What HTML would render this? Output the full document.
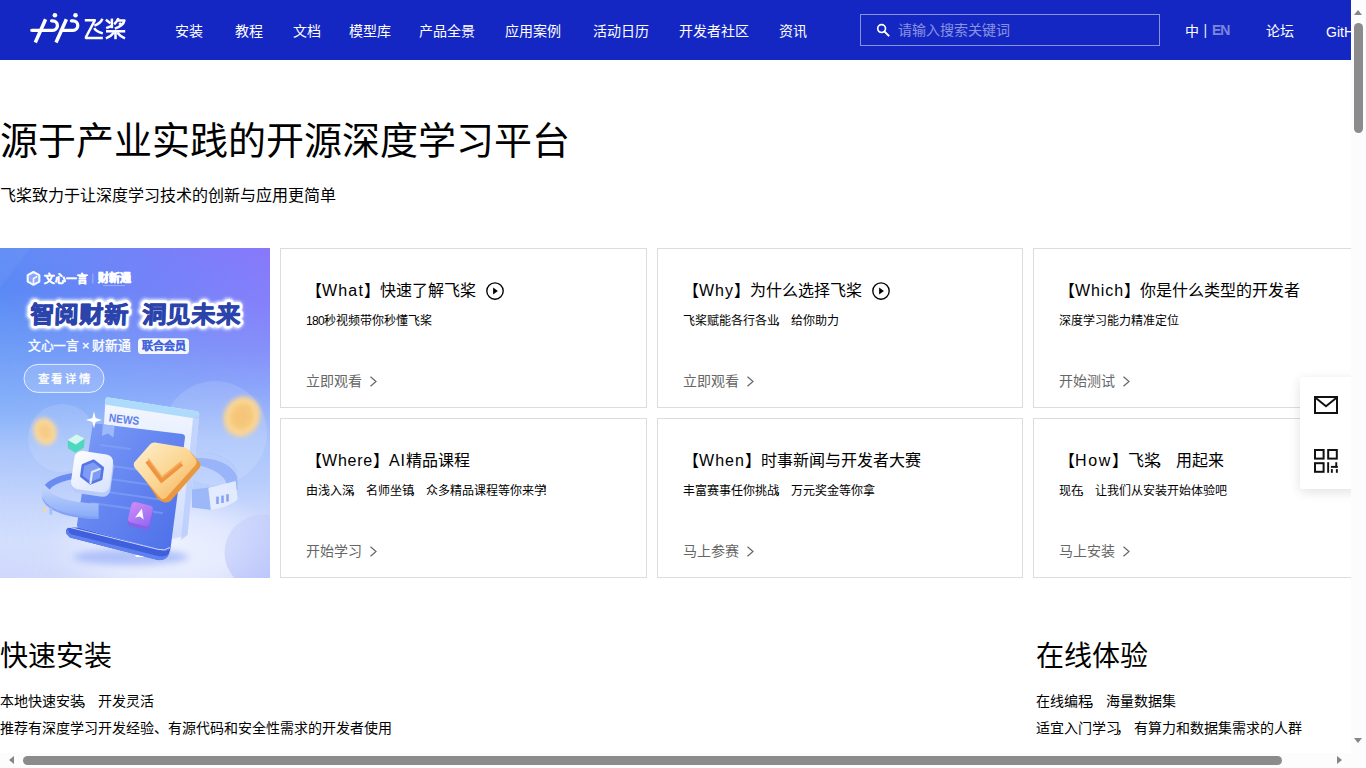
<!DOCTYPE html>
<html lang="zh-CN">
<head>
<meta charset="utf-8">
<title>飞桨PaddlePaddle-源于产业实践的开源深度学习平台</title>
<style>
*{box-sizing:border-box;}
html,body{margin:0;padding:0;}
body{width:1366px;height:768px;overflow:hidden;position:relative;background:#fff;font-family:"Liberation Sans",sans-serif;color:#000;}
a{color:inherit;text-decoration:none;}
i{font-style:normal;position:relative;left:-.3em;}
#viewport{position:absolute;left:0;top:0;width:1351px;height:753px;overflow:hidden;background:#fff;}
#page{position:absolute;left:0;top:0;width:1416px;height:753px;}
/* header */
#header{position:absolute;left:0;top:0;width:1416px;height:60px;background:#1527c2;color:#fff;font-size:14px;line-height:60px;}
#header .nav a{position:absolute;top:1px;white-space:nowrap;}
#logo{position:absolute;left:26px;top:8px;}
#logotxt{position:absolute;left:82px;top:16px;}
#search{position:absolute;left:860px;top:14px;width:300px;height:32px;border:1px solid rgba(255,255,255,.5);}
#search svg{position:absolute;left:15px;top:8px;}
#search span{position:absolute;left:37px;top:0;line-height:30px;color:rgba(255,255,255,.5);white-space:nowrap;}
.hr{position:absolute;top:1px;white-space:nowrap;}
/* hero */
h1{position:absolute;left:0;top:116px;margin:0;font-size:38px;line-height:50px;font-weight:normal;white-space:nowrap;}
#sub{position:absolute;left:0;top:184px;font-size:16px;line-height:24px;white-space:nowrap;}
#banner{position:absolute;left:0;top:248px;width:270px;height:330px;overflow:hidden;}
.card{position:absolute;width:367px;height:160px;border:1px solid #dcdcdc;background:#fff;}
.card .t{position:absolute;left:25px;top:30px;font-size:16px;line-height:24px;white-space:nowrap;}
.card .t b{font-weight:normal;}
.card .t svg{vertical-align:top;margin:3px 0 0 10px;}
.card .d{position:absolute;left:25px;top:63px;font-size:12px;line-height:18px;white-space:nowrap;}
.card .l{position:absolute;left:25px;top:122px;font-size:14px;line-height:20px;color:#666;white-space:nowrap;}
.card .l svg{vertical-align:top;margin:5px 0 0 7px;}
/* sections */
.sec{position:absolute;top:0;}
.sec h2{position:absolute;left:0;top:639px;margin:0;font-size:28px;line-height:36px;font-weight:normal;white-space:nowrap;}
.sec p{position:absolute;left:0;margin:0;font-size:14px;line-height:20px;white-space:nowrap;}
/* float */
#float{position:absolute;left:1300px;top:377px;width:60px;height:112px;background:#fff;border-radius:2px 0 0 2px;box-shadow:0 3px 12px rgba(0,0,0,.12);}
#float svg{position:absolute;left:14px;}
/* scrollbars */
#vsb{position:absolute;left:1351px;top:0;width:15px;height:753px;background:#fcfcfc;}
#hsb{position:absolute;left:0;top:753px;width:1366px;height:15px;background:#fcfcfc;}
.thumb{position:absolute;background:#8b8b8b;border-radius:5px;}
.arr{position:absolute;width:0;height:0;}
</style>
</head>
<body>
<div id="viewport">
<div id="page">

<div id="header">
  <svg id="logo" width="60" height="40" viewBox="26 8 60 40">
    <g fill="none" stroke="#fff" stroke-width="3.3" stroke-linecap="round">
      <path d="M31.8 30.3H52.7A4.7 4.7 0 0 0 52.7 20.85H51.6"/>
      <path d="M61.5 30.3H73.05A4.7 4.7 0 0 0 73.05 20.85H71.4"/>
      <path d="M45.6 19.3L35.3 42.5" stroke-linecap="butt" stroke-width="3.5"/>
      <path d="M66.4 19.3L56 42.5" stroke-linecap="butt" stroke-width="3.5"/>
    </g>
    <circle cx="54.9" cy="15.3" r="2.3" fill="#fff"/>
    <circle cx="75.5" cy="15.3" r="2.3" fill="#fff"/>
  </svg>
  <svg id="logotxt" width="46" height="26" viewBox="82 16 46 26" role="img" aria-label="飞桨"><title>飞桨</title>
    <g fill="none" stroke="#fff" stroke-width="2.5" stroke-linecap="butt" stroke-linejoin="round">
      <path d="M84.8 20.3H94.8L86 37V37.9H102.8"/>
      <path d="M102.4 18.8Q100.6 23.4 94.4 25.6"/>
      <path d="M94.2 28.2Q96.4 32 102.8 33.4"/>
      <path d="M111.9 18.6V28.2"/>
      <path d="M105.9 19.8L110.4 23.2"/>
      <path d="M106.2 28.2L111.9 25.8"/>
      <path d="M118.4 18.2Q117.2 21.6 114.2 24.2"/>
      <path d="M117.4 20.5H124.4Q123.4 25.8 114.8 28.6"/>
      <path d="M119.2 23L121.6 25.2"/>
      <path d="M106 31.3H125.2"/>
      <path d="M115.5 30.2V39.2"/>
      <path d="M114 32.6Q111.2 36.4 105.9 38.4"/>
      <path d="M117.2 32.6Q120 36.4 125 38.4"/>
    </g>
  </svg>
  <div class="nav">
    <a href="#" style="left:175px">安装</a>
    <a href="#" style="left:235px">教程</a>
    <a href="#" style="left:293px">文档</a>
    <a href="#" style="left:349px">模型库</a>
    <a href="#" style="left:419px">产品全景</a>
    <a href="#" style="left:505px">应用案例</a>
    <a href="#" style="left:593px">活动日历</a>
    <a href="#" style="left:679px">开发者社区</a>
    <a href="#" style="left:778.5px">资讯</a>
  </div>
  <div id="search">
    <svg width="14" height="14" viewBox="0 0 14 14"><circle cx="5.6" cy="5.6" r="3.9" fill="none" stroke="#fff" stroke-width="1.7"/><path d="M8.6 8.6L12.6 12.6" stroke="#fff" stroke-width="2" stroke-linecap="round"/></svg>
    <span>请输入搜索关键词</span>
  </div>
  <span class="hr" style="left:1185px">中</span>
  <span class="hr" style="left:1203.6px;top:0;color:rgba(255,255,255,.92)">|</span>
  <span class="hr" style="left:1212px;top:0;color:rgba(255,255,255,.45);font-weight:bold;letter-spacing:-1px;">EN</span>
  <a class="hr" href="#" style="left:1266px">论坛</a>
  <a class="hr" href="#" style="left:1326px;top:2px">GitHub</a>
</div>

<h1>源于产业实践的开源深度学习平台</h1>
<div id="sub">飞桨致力于让深度学习技术的创新与应用更简单</div>

<div id="banner">
<svg width="270" height="330" viewBox="0 0 270 330" style="display:block">
  <defs>
    <linearGradient id="bg" x1="0" y1="0" x2="0" y2="1"><stop offset="0.000" stop-color="#5f8df5"/><stop offset="0.127" stop-color="#5a8af5"/><stop offset="0.309" stop-color="#6f9ef7"/><stop offset="0.500" stop-color="#8bb4fa"/><stop offset="0.612" stop-color="#aac5fb"/><stop offset="0.764" stop-color="#c4d5fc"/><stop offset="0.885" stop-color="#d3dffd"/><stop offset="1.000" stop-color="#d0d9fc"/></linearGradient>
    <linearGradient id="bgr" x1="0" y1="0" x2="0" y2="1"><stop offset="0.000" stop-color="#8878fb"/><stop offset="0.158" stop-color="#8580fa"/><stop offset="0.309" stop-color="#8690f9"/><stop offset="0.430" stop-color="#8da6fa"/><stop offset="0.582" stop-color="#aac4fb"/><stop offset="0.703" stop-color="#b5ccfc"/><stop offset="0.824" stop-color="#cdd9fd"/><stop offset="0.945" stop-color="#dbe2fd"/><stop offset="1.000" stop-color="#d8defc"/></linearGradient>
    <linearGradient id="hm" x1="0" y1="0" x2="1" y2="0"><stop offset="0" stop-color="#000"/><stop offset="1" stop-color="#fff"/></linearGradient>
    <mask id="hmask" maskUnits="userSpaceOnUse" x="0" y="0" width="270" height="330"><rect width="270" height="330" fill="url(#hm)"/></mask>
    <linearGradient id="ttl" x1="0" y1="0" x2="0" y2="1"><stop offset="0" stop-color="#1b2b86"/><stop offset="1" stop-color="#3c5fd2"/></linearGradient>
    <linearGradient id="doc" x1="0" y1="0" x2="1" y2="1"><stop offset="0" stop-color="#7d9cf7"/><stop offset=".5" stop-color="#6384f0"/><stop offset="1" stop-color="#4c6ee8"/></linearGradient>
    <linearGradient id="paper" x1="0" y1="0" x2="0" y2="1"><stop offset="0" stop-color="#f4f7ff"/><stop offset="1" stop-color="#cfdcfc"/></linearGradient>
    <linearGradient id="gold" x1="0" y1="0" x2="1" y2="1"><stop offset="0" stop-color="#fff0cf"/><stop offset=".55" stop-color="#fbd591"/><stop offset="1" stop-color="#f3ab55"/></linearGradient>
    <linearGradient id="ring" x1="0" y1="0" x2="0" y2="1"><stop offset="0" stop-color="#c3d6fd"/><stop offset="1" stop-color="#86a8f8"/></linearGradient>
    <linearGradient id="sq" x1="0" y1="0" x2="1" y2="1"><stop offset="0" stop-color="#ffffff"/><stop offset="1" stop-color="#d5e1fd"/></linearGradient>
    <linearGradient id="prp" x1="0" y1="0" x2="1" y2="1"><stop offset="0" stop-color="#d58af6"/><stop offset="1" stop-color="#8d6af2"/></linearGradient>
    <radialGradient id="floor"><stop offset="0" stop-color="#f1f4ff" stop-opacity=".9"/><stop offset=".55" stop-color="#eef2ff" stop-opacity=".6"/><stop offset="1" stop-color="#e8edff" stop-opacity="0"/></radialGradient>
    <linearGradient id="bub" x1="0" y1="0" x2="1" y2="1"><stop offset="0" stop-color="#ccd5fc" stop-opacity=".55"/><stop offset="1" stop-color="#a9b6fa" stop-opacity=".85"/></linearGradient>
    <filter id="b2" x="-30%" y="-30%" width="160%" height="160%"><feGaussianBlur stdDeviation="2"/></filter>
    <filter id="b4" x="-30%" y="-60%" width="160%" height="220%"><feGaussianBlur stdDeviation="3.5"/></filter>
    <filter id="glow" x="-10%" y="-30%" width="120%" height="160%"><feGaussianBlur stdDeviation="1.6"/></filter>
  </defs>
  <rect width="270" height="330" fill="url(#bg)"/>
  <rect width="270" height="330" fill="url(#bgr)" mask="url(#hmask)"/>
  <circle cx="215" cy="185" r="52" fill="#fff" opacity=".13"/>
  <circle cx="62" cy="190" r="34" fill="#fff" opacity=".12"/>
  <ellipse cx="165" cy="300" rx="120" ry="62" fill="url(#floor)"/>
  <circle cx="262.5" cy="304.5" r="38" fill="url(#bub)"/>
  <path d="M0 0L30 0L0 40Z" fill="#fff" opacity=".04"/>

  <!-- brand row -->
  <g fill="none" stroke="#fff" stroke-width="2.1" stroke-linejoin="round" opacity=".95">
    <path d="M33.5 24L39.3 27.2V33.6L33.5 36.8L27.7 33.6V27.2Z" fill="#fff" fill-opacity=".28"/>
    <path d="M33.5 36.6V30.6L37.2 28.4" stroke-width="1.6"/>
  </g>
  <text x="44" y="34.6" font-size="10.8" font-weight="bold" fill="#fff" stroke="#fff" stroke-width=".35" textLength="43.5" lengthAdjust="spacingAndGlyphs">文心一言</text>
  <rect x="92.5" y="25.5" width=".8" height="10" fill="#fff" opacity=".45"/>
  <text x="97.6" y="34.2" font-size="11" font-weight="bold" fill="#fff" stroke="#fff" stroke-width=".6" textLength="33" lengthAdjust="spacingAndGlyphs">财新通</text>
  <rect x="103" y="37.2" width="22" height=".9" fill="#fff" opacity=".4"/>

  <!-- headline -->
  <g font-size="23.6" font-weight="bold" transform="skewX(-2)">
    <g filter="url(#glow)" opacity=".85"><text x="32.4" y="75.4" fill="#fff" stroke="#fff" stroke-width="8" stroke-linejoin="round" textLength="98.5" lengthAdjust="spacingAndGlyphs">智阅财新</text><text x="144.4" y="75.4" fill="#fff" stroke="#fff" stroke-width="8" stroke-linejoin="round" textLength="98.5" lengthAdjust="spacingAndGlyphs">洞见未来</text></g>
    <text x="32.4" y="75.4" fill="#fff" stroke="#fff" stroke-width="6.6" stroke-linejoin="round" textLength="98.5" lengthAdjust="spacingAndGlyphs">智阅财新</text>
    <text x="144.4" y="75.4" fill="#fff" stroke="#fff" stroke-width="6.6" stroke-linejoin="round" textLength="98.5" lengthAdjust="spacingAndGlyphs">洞见未来</text>
    <text x="32.4" y="75.4" fill="url(#ttl)" stroke="#2a44ac" stroke-width=".9" stroke-linejoin="round" textLength="98.5" lengthAdjust="spacingAndGlyphs">智阅财新</text>
    <text x="144.4" y="75.4" fill="url(#ttl)" stroke="#2a44ac" stroke-width=".9" stroke-linejoin="round" textLength="98.5" lengthAdjust="spacingAndGlyphs">洞见未来</text>
  </g>

  <!-- sub row -->
  <text x="28" y="102" font-size="12.8" fill="#fff" stroke="#fff" stroke-width=".3" textLength="102.6" lengthAdjust="spacing">文心一言 × 财新通</text>
  <rect x="138" y="90.2" width="51" height="15.8" rx="3.6" fill="#fff" opacity=".92"/>
  <text x="141.6" y="102" font-size="11" font-weight="bold" fill="#4464dc" stroke="#4464dc" stroke-width=".2" textLength="44" lengthAdjust="spacing">联合会员</text>

  <!-- button -->
  <rect x="24" y="116.4" width="80" height="28" rx="14" fill="#fff" fill-opacity=".16" stroke="#fff" stroke-opacity=".78" stroke-width="1"/>
  <text x="37.8" y="134.6" font-size="11.4" fill="#fff" stroke="#fff" stroke-width=".3" textLength="52" lengthAdjust="spacing">查看详情</text>

  <!-- illustration -->
  <ellipse cx="131" cy="309" rx="58" ry="8" fill="#9fb4f8" opacity=".75" filter="url(#b4)"/>
  <rect x="135.4" y="306.6" width="21" height="2.4" rx="1" fill="#fff" opacity=".95"/>
  <!-- coins -->
  <ellipse cx="242" cy="168.5" rx="18" ry="20.5" fill="#f9d594" filter="url(#b2)" transform="rotate(25 242 168.5)"/>
  <ellipse cx="242" cy="168.5" rx="11" ry="13" fill="#f3b95f" opacity=".5" filter="url(#b2)" transform="rotate(25 242 168.5)"/>
  <ellipse cx="45" cy="183.5" rx="11.5" ry="14" fill="#f9d89d" filter="url(#b2)" transform="rotate(-20 45 183.5)"/>
  <ellipse cx="45" cy="183.5" rx="6.5" ry="8.5" fill="#f3bd68" opacity=".45" filter="url(#b2)" transform="rotate(-20 45 183.5)"/>
  <!-- ring back (right part behind) -->
  <path d="M192 205.4C212 203 232 209.5 237 223L237.6 242L227 241C228.5 229 214 219.6 192 216Z" fill="#9ab4f9"/>
  <path d="M192 205.4C212 203 232 209.5 237 223L237.2 229C232 215 212 208.6 192 210.4Z" fill="#b9cdfc"/>
  <path d="M192 241.4L209 239.6L211 262L192 259.4Z" fill="#9db8f9"/>
  <path d="M208.3 240L235.7 233L237.6 251.4Q230 258.6 210.9 262Z" fill="#e6edfe" opacity=".92"/>
  <rect x="216.2" y="248.6" width="2.6" height="7.4" fill="#86a4f7"/><rect x="221.2" y="247.6" width="2.6" height="7.4" fill="#86a4f7"/><rect x="226.2" y="246.2" width="2.6" height="7.4" fill="#86a4f7"/>
  <!-- back paper -->
  <path d="M105.5 151.2Q106 149 108.5 149.4L197 163.2Q199.5 163.8 199.2 166.5L187.5 287L172 291L98 272Z" fill="url(#paper)"/>
  <path d="M105.5 151.2Q106 149 108.5 149.4L197 163.2Q199.5 163.8 199.2 166.5L198.6 171L104.6 156.5Z" fill="#aedbfb"/>
  <text x="108.5" y="173.6" font-size="11.6" font-weight="bold" fill="#5f7fea" transform="rotate(6.5 108.5 173.6)" textLength="30.5" lengthAdjust="spacingAndGlyphs">NEWS</text>
  <path d="M181 292L187.5 287L199.2 166.5L193 170Z" fill="#b9cdfb" opacity=".8"/>
  <!-- front doc -->
  <path d="M92.6 177.5Q93 175 95.6 175.4L182.5 186Q185.3 186.6 185 189.4L170.6 300Q165 305 158 301L78.2 279.5Q76.6 278.6 77 276.5Z" fill="url(#doc)"/>
  <g stroke="#8aa6f8" stroke-width="2.2" opacity=".55" stroke-linecap="round">
    <path d="M101 197L130 201"/><path d="M98 216L168 226"/><path d="M96 229L166 239"/><path d="M94 242L164 252"/><path d="M92 255L162 265"/>
  </g>
  <path d="M103 176.3L114.6 177.8L113.4 189.6L108 185.4L101.8 188Z" fill="#9db9fb"/>
  <path d="M94 163.5L95.6 170L102 172L95.6 174L94 180.5L92.4 174L86 172L92.4 170Z" fill="#fff"/>
  <!-- bottom curl -->
  <path d="M70 279.5Q64.5 280 66.6 286L70 289.5L158 312Q167 313 169.6 304L170.6 300Q166 304.5 158 301L78.2 279.5Z" fill="#3f5fdc"/>
  <path d="M66.6 286L70 289.5L158 312Q166 313 169 306Q165 309.5 158 308L72 286.5Q68 285.5 68.6 281Q65.6 282.6 66.6 286Z" fill="#5f80f0"/>
  <path d="M69 279.2L158 301.4Q165 303.2 170 299.4" fill="none" stroke="#dfe8ff" stroke-width="1" opacity=".85"/>
  <!-- ring front left -->
  <path d="M44.6 237C53 228.6 69 224.4 81 224.2L80.6 230.6C70 231 55.6 234.4 49.6 241.4Z" fill="#6a8cf2"/>
  <path d="M44.6 237C43 239 42 242 42 246L42.4 251C46 262 66 270.4 98.6 271L98.6 255.4C74 255.4 52 249.6 47.4 240Z" fill="url(#ring)"/>
  <path d="M42.2 248.6C45.6 260 66 268.4 98.6 269V271C66 270.4 46 262 42.4 251Z" fill="#7f9ff6" opacity=".8"/>
  <rect x="43.4" y="258.4" width="2.6" height="6" fill="#f3d3a5" opacity=".85"/><rect x="49.4" y="259.6" width="2.8" height="7" fill="#a3bbf9" opacity=".9"/>
  <!-- white square w/ hex -->
  <g transform="rotate(8 91.7 224.2)">
    <rect x="72.5" y="205.5" width="39" height="38.5" rx="7.5" fill="#b9cbfa" transform="translate(1.2 3)"/>
    <rect x="72.5" y="204.5" width="39" height="38.5" rx="7.5" fill="url(#sq)"/>
    <path d="M92 212.6L102 218.4V229.6L92 235.4L82 229.6V218.4Z" fill="#7f9cf4" stroke="#5575e6" stroke-width="2.6" stroke-linejoin="round"/>
    <path d="M92 235V224L99 220" fill="none" stroke="#dfe8ff" stroke-width="2.2" stroke-linecap="round"/>
  </g>
  <!-- teal cube -->
  <path d="M67.6 192L76.5 186.2L84.6 190.6L84 199.6L75.4 204.8L68 200.4Z" fill="#4fd8c0"/>
  <path d="M67.6 192L76.5 186.2L84.6 190.6L75.8 196.4Z" fill="#d6f6f1"/>
  <!-- purple tile -->
  <g transform="rotate(14 140.6 265.6)">
    <rect x="129.6" y="256.6" width="22" height="21" rx="4" fill="#8a5fe8" transform="translate(.8 2.4)"/>
    <rect x="129.6" y="255.6" width="22" height="21" rx="4" fill="url(#prp)"/>
    <path d="M140.6 260.4L145 270.6L140.6 268.6L136.2 270.6Z" fill="#fff" opacity=".95"/>
  </g>
  <!-- gold shield -->
  <path d="M137.6 221L153 199.5Q155 197 158 197.4L186 201.5Q189 202 191 204.4L199.4 214Q201.5 217 199.5 220L171 252.5Q167 256 162 253.4L158 251Z" fill="#e9983d"/>
  <path d="M134.2 214.5L150 196.4Q152 194.2 155 194.6L184 199.2Q187 199.8 188.8 202L196 211.6Q197.6 214.4 195.6 217L166.4 249.6Q163 252.6 160 249.4L134.6 219.4Q133 217 134.2 214.5Z" fill="url(#gold)"/>
  <path d="M147.4 213L161.6 232L181.6 215.6" fill="none" stroke="#ef9440" stroke-width="5" stroke-linejoin="miter"/>
  <path d="M147.4 213L161.6 232L181.6 215.6" fill="none" stroke="#f7b567" stroke-width="1.6" transform="translate(.6 -2.6)" opacity=".8"/>
</svg>
</div>

<div class="card" style="left:280px;top:248px">
  <div class="t">【<b style="letter-spacing:1.165px">What</b>】快速了解飞桨<svg class="play" width="18" height="18" viewBox="0 0 18 18"><circle cx="9" cy="9" r="8.2" fill="none" stroke="#000" stroke-width="1.35"/><path d="M7.1 5.4L11.9 8.9L7.1 12.4Z" fill="#000"/></svg></div>
  <div class="d"><b style="font-weight:normal;letter-spacing:-.67px">180</b>秒视频带你秒懂飞桨</div>
  <a class="l" href="#">立即观看<svg width="9" height="11" viewBox="0 0 9 11"><path d="M1.5 0.7L7 5.5L1.5 10.3" fill="none" stroke="#666" stroke-width="1.2"/></svg></a>
</div>
<div class="card" style="left:657px;top:248px;width:366px">
  <div class="t">【<b style="letter-spacing:1px">Why</b>】为什么选择飞桨<svg class="play" width="18" height="18" viewBox="0 0 18 18"><circle cx="9" cy="9" r="8.2" fill="none" stroke="#000" stroke-width="1.35"/><path d="M7.1 5.4L11.9 8.9L7.1 12.4Z" fill="#000"/></svg></div>
  <div class="d">飞桨赋能各行各业<i>，</i>给你助力</div>
  <a class="l" href="#">立即观看<svg width="9" height="11" viewBox="0 0 9 11"><path d="M1.5 0.7L7 5.5L1.5 10.3" fill="none" stroke="#666" stroke-width="1.2"/></svg></a>
</div>
<div class="card" style="left:1033px;top:248px">
  <div class="t">【<b style="letter-spacing:.91px">Which</b>】你是什么类型的开发者</div>
  <div class="d">深度学习能力精准定位</div>
  <a class="l" href="#">开始测试<svg width="9" height="11" viewBox="0 0 9 11"><path d="M1.5 0.7L7 5.5L1.5 10.3" fill="none" stroke="#666" stroke-width="1.2"/></svg></a>
</div>
<div class="card" style="left:280px;top:418px">
  <div class="t">【<b style="letter-spacing:.78px">Where</b>】<b style="letter-spacing:.69px">AI</b>精品课程</div>
  <div class="d">由浅入深<i>，</i>名师坐镇<i>，</i>众多精品课程等你来学<i>！</i></div>
  <a class="l" href="#">开始学习<svg width="9" height="11" viewBox="0 0 9 11"><path d="M1.5 0.7L7 5.5L1.5 10.3" fill="none" stroke="#666" stroke-width="1.2"/></svg></a>
</div>
<div class="card" style="left:657px;top:418px;width:366px">
  <div class="t">【<b style="letter-spacing:1.05px">When</b>】时事新闻与开发者大赛</div>
  <div class="d">丰富赛事任你挑战<i>，</i>万元奖金等你拿</div>
  <a class="l" href="#">马上参赛<svg width="9" height="11" viewBox="0 0 9 11"><path d="M1.5 0.7L7 5.5L1.5 10.3" fill="none" stroke="#666" stroke-width="1.2"/></svg></a>
</div>
<div class="card" style="left:1033px;top:418px">
  <div class="t">【<b style="letter-spacing:1.66px">How</b>】飞桨<i>，</i>用起来</div>
  <div class="d">现在<i>，</i>让我们从安装开始体验吧</div>
  <a class="l" href="#">马上安装<svg width="9" height="11" viewBox="0 0 9 11"><path d="M1.5 0.7L7 5.5L1.5 10.3" fill="none" stroke="#666" stroke-width="1.2"/></svg></a>
</div>

<div class="sec" style="left:0">
  <h2>快速安装</h2>
  <p style="top:691px">本地快速安装<i>，</i>开发灵活</p>
  <p style="top:718px">推荐有深度学习开发经验、有源代码和安全性需求的开发者使用</p>
</div>
<div class="sec" style="left:1036px">
  <h2>在线体验</h2>
  <p style="top:691px">在线编程<i>，</i>海量数据集</p>
  <p style="top:718px">适宜入门学习<i>，</i>有算力和数据集需求的人群</p>
</div>

<div id="float">
  <svg width="24" height="18" viewBox="0 0 24 18" style="top:19px"><rect x="1" y="1" width="22" height="16" fill="none" stroke="#111" stroke-width="2"/><path d="M1.5 1.8L12 10.2L22.5 1.8" fill="none" stroke="#111" stroke-width="2"/></svg>
  <svg width="24" height="24" viewBox="0 0 24 24" style="top:72px"><g fill="none" stroke="#111" stroke-width="2"><rect x="1" y="1" width="8.6" height="8.6"/><rect x="14.2" y="1" width="8.6" height="8.6"/><rect x="1" y="14.2" width="8.6" height="8.6"/></g><g fill="#111"><rect x="13.2" y="13.2" width="1.9" height="10.6"/><rect x="21.3" y="13.2" width="1.9" height="5.5"/><rect x="16.9" y="16.9" width="6.9" height="1.9"/><rect x="16.9" y="20.1" width="1.9" height="3.7"/><rect x="21.9" y="20.1" width="1.9" height="3.7"/></g></svg>
</div>

</div>
</div>

<div id="vsb">
  <div class="arr" style="left:3px;top:10px;border-left:4.5px solid transparent;border-right:4.5px solid transparent;border-bottom:5px solid #858585;"></div>
  <div class="thumb" style="left:3px;top:23px;width:9px;height:110px;"></div>
  <div class="arr" style="left:3px;top:738px;border-left:4.5px solid transparent;border-right:4.5px solid transparent;border-top:5px solid #858585;"></div>
</div>
<div id="hsb">
  <div class="arr" style="left:9px;top:3px;border-top:4.5px solid transparent;border-bottom:4.5px solid transparent;border-right:5px solid #858585;"></div>
  <div class="thumb" style="left:23px;top:3px;width:1259px;height:9px;"></div>
  <div class="arr" style="left:1337px;top:3px;border-top:4.5px solid transparent;border-bottom:4.5px solid transparent;border-left:5px solid #858585;"></div>
</div>
</body>
</html>
